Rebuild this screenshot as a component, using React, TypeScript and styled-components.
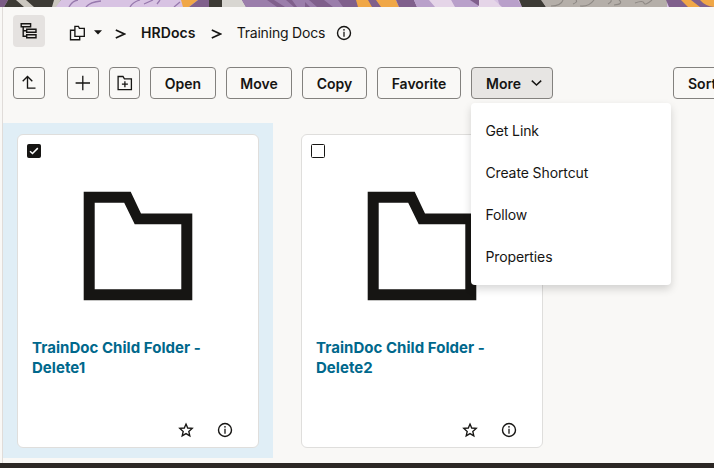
import React from "react";
import styled, { createGlobalStyle } from "styled-components";

const INK = "#161513";

const GlobalStyle = createGlobalStyle`
  * { box-sizing: border-box; }
  html, body { margin: 0; padding: 0; overflow: hidden; }
  body {
    background: #f9f8f6;
    color: ${INK};
    font-family: Inter, "Liberation Sans", sans-serif;
    font-size: 14px;
    -webkit-font-smoothing: antialiased;
  }
  svg { display: block; flex: none; }
  button { font: inherit; color: inherit; }
`;

const Page = styled.div`
  width: 714px;
  height: 468px;
  display: flex;
  flex-direction: column;
  overflow: hidden;
`;

const Banner = styled.header`
  height: 7px;
  flex: none;
`;

const Main = styled.main`
  flex: 1;
  margin-left: 2px;
  border-left: 1px solid #e0dcd9;
  display: flex;
  flex-direction: column;
  min-width: 0;
`;

const Footer = styled.footer`
  height: 5px;
  flex: none;
  background: #2b2724;
`;

const Breadcrumbs = styled.nav`
  display: flex;
  align-items: center;
  height: 32px;
  margin: 8px 0 0 10px;
`;

const TreeToggle = styled.button`
  width: 32px;
  height: 32px;
  padding: 0;
  border: 0;
  border-radius: 4px;
  background: #e5e2e0;
  display: grid;
  place-items: center;
  margin-right: 24px;
`;

const Trail = styled.div`
  display: flex;
  align-items: center;
  padding-top: 4px;
`;

const RootPicker = styled.div`
  display: flex;
  align-items: center;
  gap: 9px;
  width: 46px;
  padding-bottom: 1px;
`;

const Crumb = styled.span<{ $bold?: boolean; $track: number }>`
  font-weight: ${(p) => (p.$bold ? 600 : 400)};
  letter-spacing: ${(p) => p.$track}px;
  line-height: 20px;
  white-space: nowrap;
`;

const Separator = styled.span<{ $before?: number; $after: number }>`
  margin-left: ${(p) => p.$before ?? 0}px;
  margin-right: ${(p) => p.$after}px;
  padding-top: 1px;
`;

const CrumbInfo = styled.span`
  margin-left: 11px;
  padding-bottom: 1px;
`;

const Toolbar = styled.div`
  display: flex;
  height: 32px;
  gap: 10px;
  margin: 20px 0 0 10px;
`;

const ToolButton = styled.button<{ $width: number; $active?: boolean; $before?: number }>`
  flex: none;
  width: ${(p) => p.$width}px;
  height: 32px;
  margin-left: ${(p) => p.$before ?? 0}px;
  padding: 0;
  border: 1px solid #83817e;
  border-radius: 4px;
  background: ${(p) => (p.$active ? "#e7e5e3" : "transparent")};
  display: flex;
  align-items: center;
  justify-content: center;
  font-weight: 600;
  line-height: 20px;
  white-space: nowrap;
`;

const Label = styled.span`
  padding-top: 2px;
`;

const SortButton = styled(ToolButton)`
  justify-content: flex-start;
  padding-left: 14px;
`;

const MoreButton = styled(ToolButton)`
  justify-content: space-between;
  padding: 0 10px 0 14px;
`;

const MenuAnchor = styled.div`
  position: relative;
  flex: none;
`;

const Menu = styled.ul`
  position: absolute;
  z-index: 2;
  top: 36px;
  left: 0;
  width: 200px;
  height: 182px;
  margin: 0;
  padding: 7px 0;
  list-style: none;
  background: #fff;
  border-radius: 4px;
  box-shadow: 0 4px 8px rgba(0, 0, 0, 0.16);
`;

const MenuItem = styled.li`
  height: 42px;
  padding-left: 14.4px;
  line-height: 42px;
  letter-spacing: -0.11px;
`;

const Grid = styled.div`
  display: flex;
  gap: 14px;
  margin-top: 24px;
`;

const Tile = styled.div<{ $selected?: boolean }>`
  width: 270px;
  height: 335px;
  padding: 11px 14px 10px;
  background: ${(p) => (p.$selected ? "#e0eef6" : "transparent")};
`;

const Card = styled.article`
  width: 242px;
  height: 314px;
  background: #fff;
  border: 1px solid #dfdedc;
  border-radius: 6px;
  display: flex;
  flex-direction: column;
`;

const Check = styled.span<{ $checked?: boolean }>`
  width: 14px;
  height: 14px;
  flex: none;
  margin: 9px 0 0 9px;
  border: 1px solid ${INK};
  border-radius: 1.5px;
  background: ${(p) => (p.$checked ? INK : "#fff")};
  display: grid;
  place-items: center;
`;

const Thumb = styled.div`
  margin: 33px 0 0 65px;
  height: 112px;
`;

const Title = styled.h3`
  margin: 35px 14px 0;
  color: #00688c;
  font-size: 15px;
  font-weight: 700;
  line-height: 20px;
  letter-spacing: 0.04px;
  height: 40px;
`;

const Actions = styled.div`
  display: flex;
  justify-content: flex-end;
  gap: 22.5px;
  margin: 44.4px 25.5px 0 0;
`;

const BannerArt = () => (
  <svg width="714" height="7" viewBox="0 0 714 7">
    <path fill="#d8c3e3" d="M0 0h714v7H0z" />
    <path fill="#7b5c86" d="M0 0h8L4 7H0z" />
    <path fill="#3d3b35" d="M8 0h47l6 0-7 7H4z" />
    <path fill="#cbc7bf" d="M16 0h10l8 7H24zM54 0h7l-5 7h-4z" />
    <g fill="none" stroke="#9779ad" strokeWidth="1.3">
      <path d="M69 7q3-6 9-7M86 7q4-5 15-6M130 7q3-5 10-7M144 4l9-4M157 4l3-4M174 7l6-5" />
    </g>
    <path fill="#f0a747" d="M181 0h17l-9 7h-6z" />
    <path fill="#80608c" d="M198 0h11v7h-20z" />
    <path fill="#3d3b35" d="M209 0h13v7h-13z" />
    <path fill="#d8d6d1" d="M222 0h20l4 7h-24z" />
    <path fill="#80608c" d="M242 0h120v7H246z" />
    <path fill="#9b7eab" d="M242 0h25l10 7h-31zM274 0h12l8 7h-9zM292 0h17l8 7h-7l-5-5v5h-8zM324 0h14l5 7h-10z" />
    <path fill="#f0a747" d="M356 0h40l3 7h-41z" />
    <path fill="#80608c" d="M368 0h8l5 7h-9zM396 0h18l3 7h-18z" />
    <path fill="#b9a0ca" d="M414 0h18l4 7h-19zM451 0h26l3 7h-26zM498 0h20l4 7h-22z" />
    <path fill="#e5d5e8" d="M429 0h22l4 7h-20zM478 0h16l8 7h-24z" />
    <path fill="#80608c" d="M470 0h9v6z" />
    <path fill="#3d3b35" d="M519 0h23l4 7h-24z" />
    <path fill="#b5afa9" d="M541 0h126v7H546z" />
    <g fill="none" stroke="#8e8984" strokeWidth="1.1">
      <path d="M551 6q10 0 12-6M573 4q5-2 3-4M580 6q9 1 14-6M608 4q4-2 3-4M614 5q10-1 5-5M635 3q8-3 9 0t8-3" />
    </g>
    <path fill="#80608c" d="M666 0h48v7h-45z" />
    <path fill="#f0a747" d="M681 0h10l9 7h-12zM700 0h14v7q-9-1-14-7z" />
  </svg>
);

const TreeIcon = () => (
  <svg width="18" height="18" viewBox="0 0 18 18" fill="none" stroke={INK} strokeWidth="1.4">
    <path d="M1.200 1.700h9.400v3H1.200zM6.700 7.200h9.300v3H6.700zM6.700 12.800h9.300v3H6.700zM3.200 4.700v9.600h3.500M3.200 8.700h3.500" />
  </svg>
);

const FoldersIcon = () => (
  <svg width="16" height="16" viewBox="0 0 16 16" fill="none" stroke={INK} strokeWidth="1.35">
    <path d="M5.900 11.300V1.300h3.500l1 2h4.900v8z" />
    <path d="M5.900 5.200H1.500v9.500h9.200v-3.400" />
  </svg>
);

const CaretIcon = () => (
  <svg width="8" height="5" viewBox="0 0 8 5">
    <path d="M0 .3h8L4 4.600z" fill={INK} />
  </svg>
);

const SeparatorIcon = () => (
  <svg width="11" height="12" viewBox="0 0 11 12" fill="none" stroke={INK} strokeWidth="1.7">
    <path d="M.8 2.100 9.400 6 .8 9.900" />
  </svg>
);

const InfoIcon = () => (
  <svg width="16" height="16" viewBox="0 0 16 16" fill="none" stroke={INK}>
    <circle cx="8" cy="8" r="6.500" strokeWidth="1.4" />
    <path d="M8 6.800v5" strokeWidth="1.3" />
    <circle cx="8" cy="4.800" r=".85" fill={INK} stroke="none" />
  </svg>
);

const UpIcon = () => (
  <svg width="16" height="16" viewBox="0 0 16 16" fill="none" stroke={INK} strokeWidth="1.35">
    <path d="M1.700 6.200 6.500 1.400l4.800 4.800M6.500 1.600v11.500h8" />
  </svg>
);

const PlusIcon = () => (
  <svg width="16" height="16" viewBox="0 0 16 16" fill="none" stroke={INK} strokeWidth="1.3">
    <path d="M7.800 .8v14.400M.6 8h14.400" />
  </svg>
);

const NewFolderIcon = () => (
  <svg width="16" height="16" viewBox="0 0 16 16" fill="none" stroke={INK} strokeWidth="1.3">
    <path d="M1.100 1.500h4.900l1.400 2.400h7v10.700H1.100z" />
    <path d="M7.900 6.200v6M4.900 9.200h6" />
  </svg>
);

const DownIcon = () => (
  <svg width="11" height="7" viewBox="0 0 11 7" fill="none" stroke={INK} strokeWidth="1.5">
    <path d="m.8 .6 4.700 4.400L10.200 .6" />
  </svg>
);

const TickIcon = () => (
  <svg width="10" height="8" viewBox="0 0 10 8" fill="none" stroke="#fff" strokeWidth="1.5">
    <path d="m1 4.200 2.500 2.300L8.800 1.100" />
  </svg>
);

const FolderIcon = () => (
  <svg width="112" height="112" viewBox="0 0 112 112">
    <path
      fill={INK}
      fillRule="evenodd"
      d="M.7.7H47.700L58 22.400h51.300v86.900H.7zM11.700 11.700v86.600h86.600V33.300H51.700L41.200 11.700z"
    />
  </svg>
);

const StarIcon = () => (
  <svg width="16" height="16" viewBox="0 0 16 16" fill="none" stroke={INK} strokeWidth="1.35">
    <path d="m8 2.100 1.700 3.900 4.500.4-3.400 3 1 4.500L8 11.600l-3.800 2.300 1-4.500-3.400-3 4.500-.4z" />
  </svg>
);

const menuItems = ["Get Link", "Create Shortcut", "Follow", "Properties"];

const folders = [
  { name: "TrainDoc Child Folder - Delete1", selected: true },
  { name: "TrainDoc Child Folder - Delete2", selected: false },
];

export default function App() {
  return (
    <>
      <GlobalStyle />
      <Page>
        <Banner><BannerArt /></Banner>
        <Main>
          <Breadcrumbs>
            <TreeToggle aria-label="Toggle tree"><TreeIcon /></TreeToggle>
            <Trail>
              <RootPicker><FoldersIcon /><CaretIcon /></RootPicker>
              <Separator $after={15}><SeparatorIcon /></Separator>
              <Crumb $bold $track={0.1}>HRDocs</Crumb>
              <Separator $before={15} $after={15}><SeparatorIcon /></Separator>
              <Crumb $track={-0.2}>Training Docs</Crumb>
              <CrumbInfo><InfoIcon /></CrumbInfo>
            </Trail>
          </Breadcrumbs>
          <Toolbar>
            <ToolButton $width={32} aria-label="Up"><UpIcon /></ToolButton>
            <ToolButton $width={32} $before={12} aria-label="Add"><PlusIcon /></ToolButton>
            <ToolButton $width={31} aria-label="New folder"><NewFolderIcon /></ToolButton>
            <ToolButton $width={66}><Label>Open</Label></ToolButton>
            <ToolButton $width={66}><Label>Move</Label></ToolButton>
            <ToolButton $width={65}><Label>Copy</Label></ToolButton>
            <ToolButton $width={84}><Label>Favorite</Label></ToolButton>
            <MenuAnchor>
              <MoreButton $width={82} $active aria-expanded="true">
                <Label>More</Label>
                <DownIcon />
              </MoreButton>
              <Menu>
                {menuItems.map((label) => (
                  <MenuItem key={label}>{label}</MenuItem>
                ))}
              </Menu>
            </MenuAnchor>
            <SortButton $width={80} $before={110}><Label>Sort</Label></SortButton>
          </Toolbar>
          <Grid>
            {folders.map((folder) => (
              <Tile key={folder.name} $selected={folder.selected}>
                <Card>
                  <Check $checked={folder.selected}>{folder.selected && <TickIcon />}</Check>
                  <Thumb><FolderIcon /></Thumb>
                  <Title>{folder.name}</Title>
                  <Actions><StarIcon /><InfoIcon /></Actions>
                </Card>
              </Tile>
            ))}
          </Grid>
        </Main>
        <Footer />
      </Page>
    </>
  );
}
